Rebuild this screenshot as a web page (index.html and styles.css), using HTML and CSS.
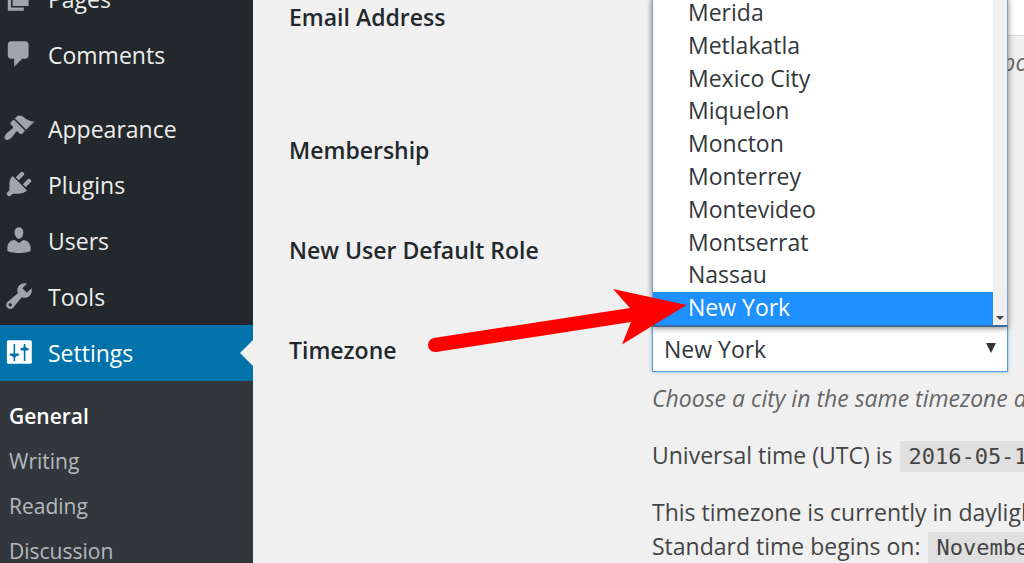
FILE: index.html
```html
<!DOCTYPE html>
<html lang="en">

<head>
    <meta charset="UTF-8">
    <meta name="viewport" content="width=device-width, initial-scale=1.0">
    <title>General Settings</title>
    <link rel="stylesheet" href="styles.css">
</head>

<body>
    <!-- Admin Menu -->
    <nav class="sidebar">
        <ul class="menu">
            <li>
                <a href="#pages">
                    <svg viewBox="0 0 20 20"><path d="M6 15V2h10v13H6zm-1 1h8v2H3V5h2v11z"/></svg>
                    Pages
                </a>
            </li>
            <li>
                <a href="#comments">
                    <svg viewBox="0 0 20 20"><path d="M5 2h9c1.1 0 2 .9 2 2v7c0 1.1-.9 2-2 2h-2l-5 5v-5H5c-1.1 0-2-.9-2-2V4c0-1.1.9-2 2-2z"/></svg>
                    Comments
                </a>
            </li>
            <li class="group-start">
                <a href="#appearance">
                    <svg viewBox="0 0 20 20"><path d="M14.48 11.06L7.41 3.99l1.5-1.5c.5-.56 2.3-.47 3.51.32 1.21.8 1.43 1.28 2.91 2.1 1.18.64 2.45 1.26 4.45.85zm-.71.71L6.7 4.7 4.93 6.47c-.39.39-.39 1.02 0 1.41l1.06 1.06c.39.39.39 1.03 0 1.42-.6.6-1.43 1.11-2.21 1.69-.35.26-.7.53-1.01.84C1.43 14.23.4 16.08 1.4 17.07c.99 1 2.84-.03 4.18-1.36.31-.31.58-.66.85-1.02.57-.78 1.08-1.61 1.69-2.21.39-.39 1.02-.39 1.41 0l1.06 1.06c.39.39 1.02.39 1.41 0z"/></svg>
                    Appearance
                </a>
            </li>
            <li>
                <a href="#plugins">
                    <svg viewBox="0 0 20 20"><path d="M13.11 4.36L9.87 7.6 8 5.73l3.24-3.24c.35-.34 1.05-.2 1.56.32.52.51.66 1.21.31 1.55zm-8 1.77l.91-1.12 9.01 9.01-1.19.84c-.71.71-2.63 1.16-3.82 1.16H6.14L4.9 17.26c-.59.59-1.54.59-2.12 0-.59-.58-.59-1.53 0-2.12l1.24-1.24v-3.88c0-1.13.4-3.19 1.09-3.89zm7.26 3.97l3.24-3.24c.34-.35 1.04-.21 1.55.31.52.51.66 1.21.31 1.55l-3.24 3.25z"/></svg>
                    Plugins
                </a>
            </li>
            <li>
                <a href="#users">
                    <svg viewBox="0 0 20 20"><path d="M10 9.25c-2.27 0-2.73-3.44-2.73-3.44C7 4.02 7.82 2 9.97 2c2.16 0 2.98 2.02 2.71 3.81 0 0-.41 3.44-2.68 3.44zm0 2.57L12.72 10c2.39 0 4.52 2.33 4.52 4.53v2.49s-3.65 1.13-7.24 1.13c-3.65 0-7.24-1.13-7.24-1.13v-2.49c0-2.25 1.94-4.48 4.47-4.48z"/></svg>
                    Users
                </a>
            </li>
            <li>
                <a href="#tools">
                    <svg viewBox="0 0 20 20"><path d="M16.68 9.77c-1.34 1.34-3.3 1.67-4.95.99l-5.41 6.52c-.99.99-2.59.99-3.58 0s-.99-2.59 0-3.57l6.52-5.42c-.68-1.65-.35-3.61.99-4.95 1.28-1.28 3.12-1.62 4.72-1.06l-2.89 2.89 2.82 2.82 2.86-2.87c.53 1.58.18 3.39-1.08 4.65zM3.81 16.21c.4.39 1.04.39 1.43 0 .4-.4.4-1.04 0-1.43-.39-.4-1.03-.4-1.43 0-.39.39-.39 1.03 0 1.43z"/></svg>
                    Tools
                </a>
            </li>
            <li class="current">
                <a href="#settings">
                    <svg viewBox="0.6 0.6 20 20">
                        <rect x="3" y="3.2" width="15.6" height="14.8" rx="1"/>
                        <path class="slider" d="M7.2 5.6h1v5.9h1.9c.4 0 .6.3.6.7s-.2.8-.6.8H9.4l-1.2 1v2.2h-1V14L6 13h-.7c-.4 0-.6-.4-.6-.8s.2-.7.6-.7h1.9zM13.6 16.2V9.6h-1.5c-.4 0-.6-.3-.6-.7s.2-.8.6-.8h.6l.9-1V5.6h1v1.5l.9 1h.6c.4 0 .6.4.6.8s-.2.7-.6.7h-1.5v6.6z"/>
                    </svg>
                    Settings
                </a>
            </li>
        </ul>
        <ul class="submenu">
            <li><a class="active" href="#general">General</a></li>
            <li><a href="#writing">Writing</a></li>
            <li><a href="#reading">Reading</a></li>
            <li><a href="#discussion">Discussion</a></li>
        </ul>
    </nav>

    <!-- Settings Form -->
    <main class="content">
        <form class="settings">
            <div class="row">
                <label for="email">Email Address</label>
                <div class="field">
                    <input type="email" id="email" class="text-input">
                    <p class="description">This address is used for admin purposes</p>
                </div>
            </div>
            <div class="row">
                <label for="membership">Membership</label>
                <div class="field">
                    <input type="checkbox" id="membership" class="checkbox">
                </div>
            </div>
            <div class="row">
                <label for="role">New User Default Role</label>
                <div class="field">
                    <select id="role" class="role-select">
                        <option>Subscriber</option>
                    </select>
                </div>
            </div>
            <div class="row">
                <label for="timezone">Timezone</label>
                <div class="field">
                    <div class="timezone">
                        <select id="timezone" class="timezone-select">
                            <option>New York</option>
                        </select>
                        <span class="caret"></span>

                        <!-- Open list of cities -->
                        <div class="dropdown">
                            <ul class="cities" role="listbox" aria-label="Timezone">
                                <li role="option">Merida</li>
                                <li role="option">Metlakatla</li>
                                <li role="option">Mexico City</li>
                                <li role="option">Miquelon</li>
                                <li role="option">Moncton</li>
                                <li role="option">Monterrey</li>
                                <li role="option">Montevideo</li>
                                <li role="option">Montserrat</li>
                                <li role="option">Nassau</li>
                                <li role="option" class="selected" aria-selected="true">New York</li>
                            </ul>
                            <div class="scrollbar"><span class="scroll-down"></span></div>
                        </div>

                        <!-- Red pointer -->
                        <svg class="pointer" viewBox="0 0 260 60">
                            <path d="M6.5 50L203 20 186 1l73.5 16L195 56.5l9-22.5L9 64z" />
                            <circle cx="8" cy="57" r="7" />
                        </svg>
                    </div>
                    <p class="description">Choose a city in the same timezone as you.</p>
                    <p class="time">Universal time (UTC) is <code>2016-05-12</code></p>
                    <p class="time">This timezone is currently in daylight<br>Standard time begins on: <code>November</code></p>
                </div>
            </div>
        </form>
    </main>
</body>

</html>
```
FILE: styles.css
```css
* {
    box-sizing: border-box;
}

body {
    font-family: 'Open Sans', 'Noto Sans', sans-serif;
    font-size: 23px;
    color: #444;
    background: #f0f0f0;
    margin: 0;
    display: flex;
    height: 100vh;
    overflow: hidden;
}

ul {
    list-style: none;
    margin: 0;
    padding: 0;
}

/* Admin Menu */
.sidebar {
    flex: 0 0 253px;
    background: #23282d;
    display: flex;
    flex-direction: column;
}

.menu {
    /* scrolled so that Pages is cut by the top edge */
    margin-top: -29px;
}

.menu a {
    display: flex;
    align-items: center;
    gap: 13px;
    height: 56px;
    padding-left: 3px;
    color: #eee;
    text-decoration: none;
}

.menu svg {
    width: 32px;
    height: 32px;
    margin-bottom: 2px;
    fill: #a0a5aa;
}

.group-start {
    margin-top: 18px;
}

.current {
    position: relative;
    background: #0073aa;
}

.menu .current a {
    color: #fff;
}

.menu .current svg {
    fill: #fff;
}

.menu .current .slider {
    fill: #0073aa;
}

/* Notch pointing at the open page */
.current::after {
    content: '';
    position: absolute;
    right: 0;
    top: 15px;
    border: 13px solid transparent;
    border-left: 0;
    border-right-color: #f0f0f0;
}

.submenu {
    flex: 1;
    background: #32373c;
    padding-top: 13px;
}

.submenu a {
    display: block;
    padding-left: 9px;
    font-size: 21px;
    line-height: 45px;
    color: #b4b9be;
    text-decoration: none;
}

.submenu .active {
    color: #fff;
    font-weight: 600;
}

/* Settings Form */
.content {
    flex: 1;
    min-width: 0;
    padding-left: 36px;
    overflow: hidden;
}

.settings {
    margin-top: -31px;
}

.row {
    display: flex;
    min-height: 100px;
}

.row > label {
    flex: 0 0 363px;
    padding-top: 32px;
    line-height: 32px;
    font-weight: 600;
    color: #23282d;
}

.field {
    flex: 1;
    min-width: 0;
    padding-top: 24px;
    white-space: nowrap;
}

.text-input {
    display: block;
    width: 560px;
    height: 43px;
    border: 1px solid #ddd;
    background: #fff;
}

.checkbox {
    appearance: none;
    display: block;
    width: 26px;
    height: 26px;
    margin: 9px 0 0;
    border: 1px solid #b4b9be;
    background: #fff;
}

.role-select {
    display: block;
    width: 200px;
    height: 46px;
    border: 1px solid #ddd;
    background: #fff;
}

.description {
    margin: 10px 0 24px;
    line-height: 32px;
    font-style: italic;
    color: #666;
}

.time {
    margin: 0 0 23px;
    line-height: 34px;
}

code {
    padding: 3px 8px;
    margin-left: 2px;
    font-family: 'DejaVu Sans Mono', monospace;
    font-size: 22px;
    line-height: 30px;
    background: #e0e0e0;
}

/* Timezone Select */
.timezone {
    position: relative;
    width: 356px;
    height: 46px;
}

.timezone-select {
    appearance: none;
    width: 100%;
    height: 100%;
    padding: 0 11px;
    border: 1px solid #5b9dd9;
    box-shadow: 0 0 3px rgba(30, 140, 190, 0.6);
    background: #fff;
    color: #32373c;
    font: inherit;
}

.caret {
    position: absolute;
    right: 12px;
    top: 17px;
    border: 5px solid transparent;
    border-top: 10px solid #32373c;
    border-bottom: 0;
}

.dropdown {
    position: absolute;
    left: 0;
    right: 0;
    bottom: 100%;
    display: flex;
    border: 1px solid #7a9fd0;
    border-bottom-color: #3a6ea5;
    background: #fff;
    box-shadow: 0 2px 6px rgba(0, 0, 0, 0.5);
    color: #32373c;
}

/* Ten equal rows */
.cities {
    flex: 1;
    display: grid;
    grid-auto-rows: 1fr;
    height: 328px;
}

.cities li {
    padding-left: 35px;
    line-height: 30px;
}

.cities .selected {
    background: #1e90ff;
    color: #fff;
}

.scrollbar {
    display: flex;
    align-items: flex-end;
    justify-content: center;
    width: 14px;
    padding-bottom: 5px;
    background: #f0f0f0;
}

.scroll-down {
    border: 4px solid transparent;
    border-top-color: #444;
    border-bottom: 0;
}

.pointer {
    position: absolute;
    right: 321px;
    bottom: 24px;
    width: 260px;
    height: 60px;
    fill: #f00;
    overflow: visible;
}
```
